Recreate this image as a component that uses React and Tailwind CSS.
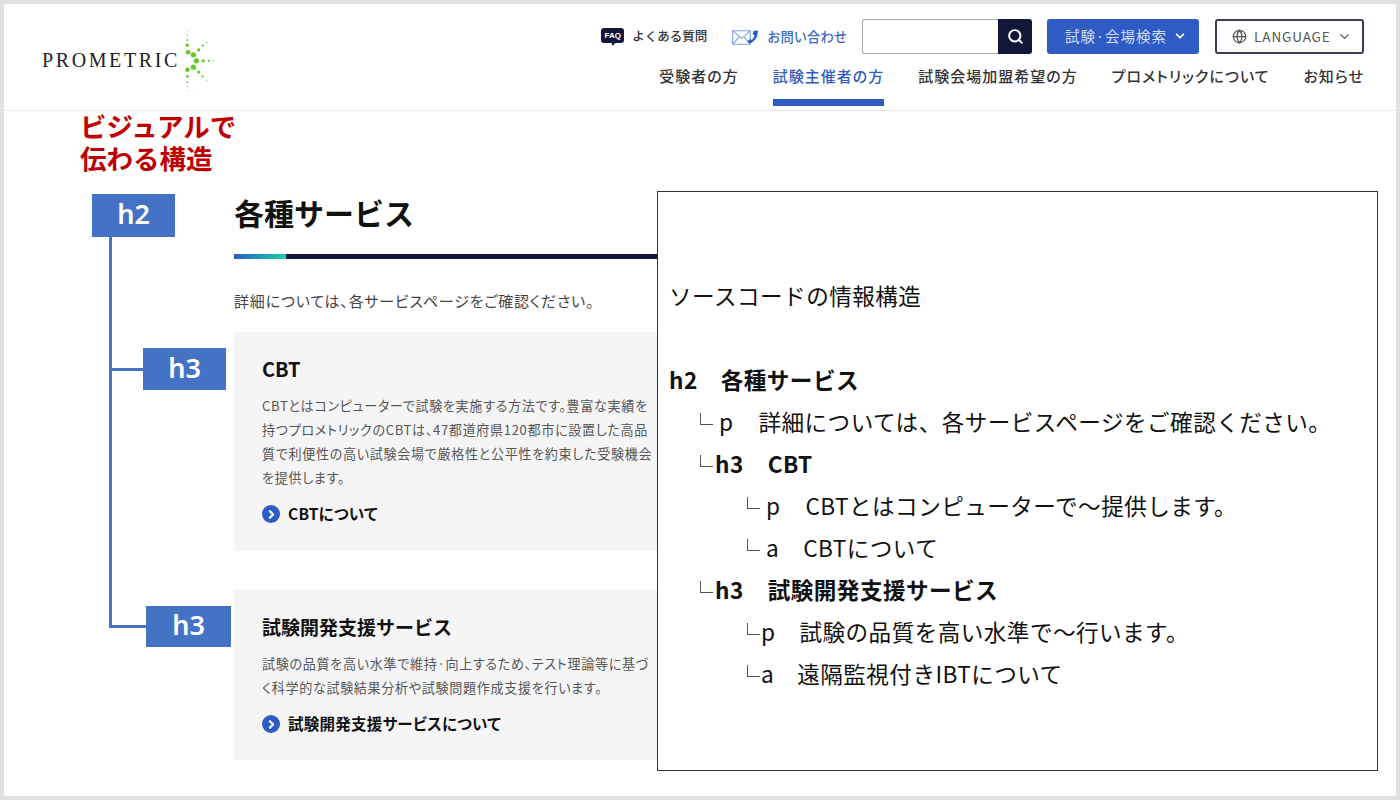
import { Search, ChevronDown, ChevronRight, Globe } from "lucide-react";

const FONT = "font-['Noto_Sans_CJK_JP','Noto_Sans',sans-serif]";

const NAV_ITEMS = ["受験者の方", "試験主催者の方", "試験会場加盟希望の方", "プロメトリックについて", "お知らせ"];

const LOGO_DOTS = [
  [503, 35, 1.5], [503, 46, 2], [503, 60, 3], [503, 76, 5], [505, 97, 7], [521, 105, 8],
  [537, 90, 5], [549, 77, 3.5], [561, 68, 2], [530, 123, 8], [551, 123, 5], [568, 123, 3.5],
  [583, 123, 2], [597, 123, 1.2], [521, 142, 8], [503, 150, 7], [537, 157, 5], [549, 170, 3.5],
  [561, 181, 2], [503, 170, 4], [503, 187, 3], [503, 200, 2], [503, 213, 1.5], [517, 215, 1],
];

const SOURCE_ROWS = [
  { pl: "pl-[11px]", h: "h-[43px]", bold: true, label: "h2", gap: "w-[23px]", text: "各種サービス" },
  { pl: "pl-[42px]", h: "h-[42px]", mark: true, label: "p", gap: "w-[25px]", text: "詳細については、各サービスページをご確認ください。" },
  { pl: "pl-[42px]", h: "h-[42px]", mark: true, bold: true, label: "h3", gap: "w-[24px]", text: "CBT" },
  { pl: "pl-[89px]", h: "h-[42px]", mark: true, label: "p", gap: "w-[25px]", text: "CBTとはコンピューターで～提供します。" },
  { pl: "pl-[89px]", h: "h-[42px]", mark: true, label: "a", gap: "w-[24px]", text: "CBTについて" },
  { pl: "pl-[42px]", h: "h-[42px]", mark: true, bold: true, label: "h3", gap: "w-[24px]", text: "試験開発支援サービス" },
  { pl: "pl-[89px]", h: "h-[42px]", mark: true, tight: true, label: "p", gap: "w-[24px]", text: "試験の品質を高い水準で～行います。" },
  { pl: "pl-[89px]", h: "h-[42px]", mark: true, tight: true, label: "a", gap: "w-[23px]", text: "遠隔監視付きIBTについて" },
];

function Logo() {
  return (
    <div className="flex items-start pl-[38px] pt-[26px]">
      <span className="font-['Liberation_Serif',serif] text-[20px] leading-[22px] tracking-[2.6px] text-[#222] mt-[19px]">PROMETRIC</span>
      <svg viewBox="490 30 120 190" className="w-[40px] h-[63px] ml-[3px]">
        {LOGO_DOTS.map(([cx, cy, r], i) => (
          <circle key={i} cx={cx} cy={cy} r={r} fill="#62c92a" />
        ))}
      </svg>
    </div>
  );
}

function FaqIcon() {
  return (
    <span className="relative w-[23px] h-[15px] rounded-[3px] bg-[#12173a] text-white text-[8px] leading-[15px] font-bold text-center font-['Liberation_Sans',sans-serif] mr-[8px] mb-[2px]">
      FAQ
      <span className="absolute left-[10px] top-[14px] w-[5px] h-[4px] bg-[#12173a] [clip-path:polygon(0_0,100%_0,30%_100%)]" />
    </span>
  );
}

function MailIcon() {
  return (
    <svg viewBox="0 0 28 16" className="w-[28px] h-[16px] mr-[7px]" fill="none">
      <path d="M.7 1.7h17.6v13.6H.7zM.7 1.7l9 7.6 8.6-7.6M.7 15.3l6.8-7.6M18.3 15.3l-6.6-7.6" stroke="#7fa0df" strokeWidth="1.1" />
      <path d="M25.5 1.2c1.4 4.6-2.2 11.4-7.8 13.4l-2.3-2.3 3-2.3 1.4 1c1.5-1.2 2.3-3 2.6-5l-1.7-.5.8-3.6z" fill="#2f5bc4" />
    </svg>
  );
}

function Header() {
  return (
    <header className="flex justify-between h-[107px] border-b border-[#e9e9e9]">
      <Logo />
      <div className="flex flex-col items-end pr-[32px]">
        <div className="flex items-center h-[35px] mt-[15px]">
          <FaqIcon />
          <span className="text-[12.5px] font-medium text-[#333] mr-[25px]">よくある質問</span>
          <MailIcon />
          <span className="text-[13.3px] font-medium text-[#3f6cc9] mr-[15px]">お問い合わせ</span>
          <div className="flex w-[170px] h-[35px] mr-[15px]">
            <div className="flex-1 border border-[#aaa] border-r-0 rounded-l-[3px] bg-white" />
            <div className="w-[34px] flex items-center justify-center bg-[#12173a] rounded-r-[3px]">
              <Search size={17} strokeWidth={2.8} color="#fff" />
            </div>
          </div>
          <div className="flex items-center justify-center gap-[6px] w-[152px] h-[35px] pl-[6px] pb-[2px] bg-[#2f5bc4] rounded-[3px] text-[14.5px] tracking-[1px] text-[#d5def5] mr-[16px]">
            試験·会場検索
            <ChevronDown size={14} strokeWidth={3} color="#fff" />
          </div>
          <div className="flex items-center w-[149px] h-[35px] pl-[15px] pb-[1px] border-2 border-[#3a3f57] rounded-[3px] text-[#555] text-[13.5px]">
            <Globe size={15} strokeWidth={2} className="mr-[7px]" />
            <span className="tracking-[0.9px] mr-[6px]">LANGUAGE</span>
            <ChevronDown size={15} strokeWidth={2} />
          </div>
        </div>
        <nav className="flex gap-[34px] mt-[10px] [font-feature-settings:'palt']">
          {NAV_ITEMS.map((item, i) => (
            <span
              key={item}
              className={`h-[42px] text-[15px] leading-[24px] font-medium tracking-[1px] border-b-[7px] ${
                i === 1 ? "text-[#2f5bc4] border-[#2f5bc4]" : "text-[#333] border-transparent"
              }`}
            >
              {item}
            </span>
          ))}
        </nav>
      </div>
    </header>
  );
}

function ServiceCard({ title, titleSize, height, text, link }) {
  return (
    <section className={`bg-[#f5f5f5] pl-[28px] pt-[25px] ${height}`}>
      <h3 className={`${titleSize} leading-[26px] font-bold text-[#111]`}>{title}</h3>
      <p className="text-[13.1px] leading-[24px] text-[#555] mt-[12px] [font-feature-settings:'palt'] tracking-[0.65px] whitespace-pre">{text}</p>
      <div className="flex items-center mt-[12px] h-[24px]">
        <span className="flex items-center justify-center w-[18px] h-[18px] rounded-full bg-[#2f5bc4]">
          <ChevronRight size={13} strokeWidth={4} color="#fff" />
        </span>
        <span className="ml-[8px] text-[15.5px] font-bold text-[#111] [font-feature-settings:'palt'] tracking-[0.25px]">{link}</span>
      </div>
    </section>
  );
}

function SiteContent() {
  return (
    <div className="w-[653px] shrink-0 pl-[76px]">
      <div className="text-[26.5px] leading-[32px] font-bold text-[#c00000] -mt-px mb-px">
        ビジュアルで
        <br />
        伝わる構造
      </div>
      <div className="pl-[154px] pt-[16px]">
        <h2 className="text-[30px] leading-[42px] font-bold text-[#111]">各種サービス</h2>
        <div className="flex h-[5px] mt-[21px]">
          <div className="w-[52px] bg-gradient-to-r from-[#2f5bc4] to-[#20cfa5]" />
          <div className="flex-1 bg-[#12173a]" />
        </div>
        <p className="text-[15px] leading-[24px] text-[#444] mt-[30px] [font-feature-settings:'palt'] tracking-[0.8px]">
          詳細については、各サービスページをご確認ください。
        </p>
        <div className="mt-[19px]">
          <ServiceCard
            title="CBT"
            titleSize="text-[20px] -mt-px mb-px"
            height="h-[219px]"
            text={"CBTとはコンピューターで試験を実施する方法です。豊富な実績を\n持つプロメトリックのCBTは、47都道府県120都市に設置した高品\n質で利便性の高い試験会場で厳格性と公平性を約束した受験機会\nを提供します。"}
            link="CBTについて"
          />
        </div>
        <div className="mt-[38px]">
          <ServiceCard
            title="試験開発支援サービス"
            titleSize="text-[19px]"
            height="h-[171px]"
            text={"試験の品質を高い水準で維持·向上するため、テスト理論等に基づ\nく科学的な試験結果分析や試験問題作成支援を行います。"}
            link="試験開発支援サービスについて"
          />
        </div>
      </div>
    </div>
  );
}

function SourcePanel() {
  return (
    <aside className="relative z-10 w-[721px] h-[580px] mt-[80px] bg-white border border-[#333] text-[22.6px] tracking-[0.45px] text-[#111]">
      <div className="pl-[11px] pt-[87px] leading-[34px]">ソースコードの情報構造</div>
      <div className="mt-[45px]">
        {SOURCE_ROWS.map((row) => (
          <div key={row.text} className={`flex items-center ${row.pl} ${row.h} ${row.bold ? "font-bold" : "font-normal"}`}>
            {row.mark && <span className="w-[13px] h-[12px] mb-[6px] mr-[2px] border-l border-b border-[#555] shrink-0" />}
            <span className={row.bold ? "" : row.tight ? "-ml-[1px]" : "ml-[4px]"}>{row.label}</span>
            <span className={`${row.gap} shrink-0`} />
            <span>{row.text}</span>
          </div>
        ))}
      </div>
    </aside>
  );
}

// h2 / h3 の注釈とそれをつなぐ線
function Annotations() {
  const badge = "absolute z-20 flex items-center justify-center bg-[#4472c4] text-white text-[27px] font-semibold pb-[2px] font-['Noto_Sans',sans-serif]";
  return (
    <>
      <div className="absolute z-10 left-[105px] top-[233px] w-[3px] h-[391px] bg-[#4472c4]" />
      <div className="absolute z-10 left-[105px] top-[364px] w-[40px] h-[3px] bg-[#4472c4]" />
      <div className="absolute z-10 left-[105px] top-[621px] w-[40px] h-[3px] bg-[#4472c4]" />
      <div className={`${badge} left-[88px] top-[190px] w-[83px] h-[43px]`}>h2</div>
      <div className={`${badge} left-[139px] top-[344px] w-[83px] h-[42px]`}>h3</div>
      <div className={`${badge} left-[142px] top-[602px] w-[85px] h-[41px]`}>h3</div>
    </>
  );
}

export default function App() {
  return (
    <div className={`relative w-[1400px] h-[800px] border-4 border-[#e2e2e2] bg-white overflow-hidden ${FONT}`}>
      <Header />
      <main className="flex">
        <SiteContent />
        <SourcePanel />
      </main>
      <Annotations />
    </div>
  );
}
